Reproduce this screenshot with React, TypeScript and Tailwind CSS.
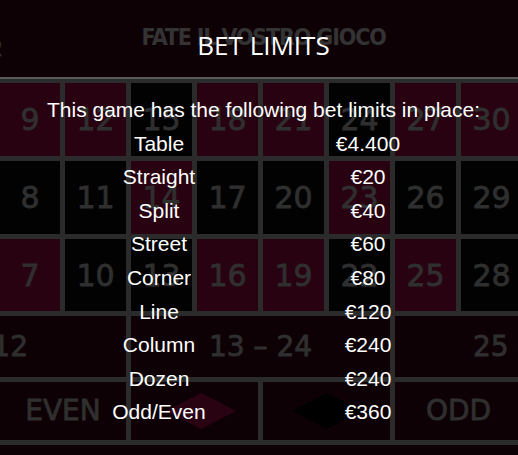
const rows = [
  [['9', 'r'], ['12', 'r'], ['15', 'b'], ['18', 'r'], ['21', 'r'], ['24', 'b'], ['27', 'r'], ['30', 'r']],
  [['8', 'b'], ['11', 'b'], ['14', 'r'], ['17', 'b'], ['20', 'b'], ['23', 'r'], ['26', 'b'], ['29', 'b']],
  [['7', 'r'], ['10', 'b'], ['13', 'b'], ['16', 'r'], ['19', 'r'], ['22', 'b'], ['25', 'r'], ['28', 'b']],
]

const limits = [
  ['Table', '€4.400'],
  ['Straight', '€20'],
  ['Split', '€40'],
  ['Street', '€60'],
  ['Corner', '€80'],
  ['Line', '€120'],
  ['Column', '€240'],
  ['Dozen', '€240'],
  ['Odd/Even', '€360'],
]

const numFont = "font-['DejaVu_Sans',sans-serif] text-[#2f2f2f] [-webkit-text-stroke:0.8px_#2f2f2f]"

function Diamond({ fill }: { fill: string }) {
  return (
    <svg width="70" height="36" viewBox="0 0 70 36">
      <polygon points="35,0 70,18 35,36 0,18" fill={fill} />
    </svg>
  )
}

export default function App() {
  return (
    <div className="relative w-[518px] h-[455px] overflow-hidden bg-[#0e0105]">
      {/* header */}
      <div className="relative h-[77px] flex justify-center pl-[9px] pt-[25px]">
        <span className="font-['DejaVu_Sans_Condensed','DejaVu_Sans',sans-serif] font-bold text-[23px] leading-[24px] tracking-[-0.05em] text-[#333333]">
          FATE IL VOSTRO GIOCO
        </span>
        <span className={`absolute right-[515px] top-[38px] text-[22px] leading-[22px] ${numFont}`}>12</span>
      </div>
      <div className="h-[2px] bg-[#595959]" />

      {/* table */}
      <div className="flex flex-col gap-[5px] bg-[#2b2b2b] pt-[4px] pb-[5px]">
        {rows.map((row, i) => (
          <div key={i} className={`flex gap-[5px] ${i === 2 ? 'h-[72px]' : 'h-[73px]'}`}>
            {row.map(([n, c], j) => (
              <div
                key={n}
                className={`shrink-0 flex items-center justify-center text-[30px] ${numFont} ${j === 0 ? 'w-[60px]' : 'w-[61px]'} ${c === 'r' ? 'bg-[#290211]' : 'bg-[#020202]'}`}
              >
                {n}
              </div>
            ))}
          </div>
        ))}
        <div className="flex gap-[5px] h-[61px] text-[28px]">
          <div className={`shrink-0 w-[126px] flex items-center justify-end pr-[98px] whitespace-nowrap bg-[#0e0105] ${numFont}`}>1 – 12</div>
          <div className={`shrink-0 w-[259px] flex items-center justify-center whitespace-nowrap bg-[#0e0105] ${numFont}`}>13 – 24</div>
          <div className={`shrink-0 w-[259px] flex items-center justify-center whitespace-nowrap bg-[#0e0105] ${numFont}`}>25 – 36</div>
        </div>
        <div className="flex gap-[5px] h-[58px] text-[28px]">
          <div className={`shrink-0 w-[126px] flex items-center justify-center bg-[#0e0105] ${numFont}`}>EVEN</div>
          <div className="shrink-0 w-[127px] flex items-center justify-center bg-[#0e0105] pl-[12px]">
            <Diamond fill="#2a0313" />
          </div>
          <div className="shrink-0 w-[127px] flex items-center justify-center bg-[#0e0105]">
            <Diamond fill="#000000" />
          </div>
          <div className={`shrink-0 w-[127px] flex items-center justify-center bg-[#0e0105] ${numFont}`}>ODD</div>
        </div>
      </div>

      {/* bet limits overlay */}
      <div className="absolute inset-0 flex flex-col items-center pl-[9px] text-white">
        <h1 className="mt-[28px] font-['Open_Sans',sans-serif] text-[26px] leading-[35px]">BET LIMITS</h1>
        <div className="mt-[30px] font-['Liberation_Sans',Arial,sans-serif] text-[21px] leading-[33.6px] text-center">
          <p className="whitespace-nowrap">This game has the following bet limits in place:</p>
          <div className="grid grid-cols-[209px_209px] mx-auto w-[418px]">
            {limits.map(([label, value]) => (
              <div key={label} className="contents">
                <span>{label}</span>
                <span>{value}</span>
              </div>
            ))}
          </div>
        </div>
      </div>
    </div>
  )
}
